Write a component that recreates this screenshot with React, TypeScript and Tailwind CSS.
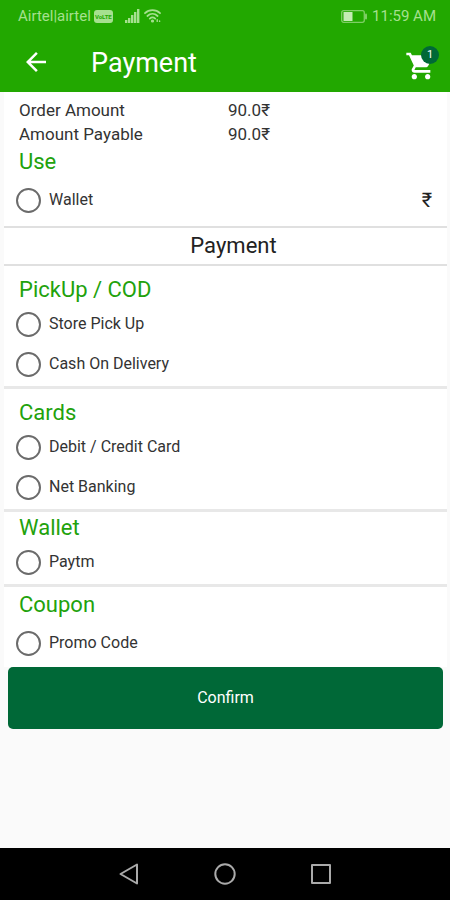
import { useState } from "react";
import { MdArrowBack, MdShoppingCart } from "react-icons/md";

const sections = [
  {
    title: "PickUp / COD",
    className: "pt-2.5",
    options: ["Store Pick Up", "Cash On Delivery"],
  },
  {
    title: "Cards",
    className: "pt-2.5",
    options: ["Debit / Credit Card", "Net Banking"],
  },
  { title: "Wallet", className: "pt-0.5", options: ["Paytm"] },
];

function StatusBar() {
  return (
    <div className="flex h-8 items-center justify-between pl-[18px] pr-[14px] text-[15px] text-[#a6e08f]">
      <div className="flex items-center">
        <span>Airtel|airtel</span>
        <span className="ml-[3px] flex h-[13px] w-[19px] items-center justify-center rounded-[3px] bg-[#a6e08f] text-[6px] font-bold text-[#22a800]">
          VoLTE
        </span>
        {/* Signal strength */}
        <svg className="ml-3 h-[14px] w-[16px]" viewBox="0 0 16 14" fill="currentColor">
          <rect x="0" y="11" width="2.4" height="3" />
          <rect x="3" y="9" width="2.4" height="5" />
          <rect x="6" y="6" width="2.4" height="8" />
          <rect x="9" y="3" width="2.4" height="11" />
          <rect x="12" y="0" width="2.4" height="14" />
        </svg>
        {/* Wifi */}
        <svg
          className="ml-[3px] h-[14px] w-[18px]"
          viewBox="0 0 18 14"
          fill="none"
          stroke="currentColor"
          strokeWidth="1.8"
          strokeLinecap="round"
        >
          <path d="M1 4.2C5 .2 12 .2 16 4.2" />
          <path d="M3.4 7C6.4 4.2 10.6 4.2 13.6 7" />
          <path d="M5.8 9.6c1.6-1.4 3.8-1.4 5.4 0" />
          <circle cx="8.5" cy="12" r="0.7" fill="currentColor" />
          <path d="M13.2 10.8v1.6M15.6 12v.4" strokeWidth="1.4" />
        </svg>
      </div>
      <div className="flex items-center gap-[5px]">
        <svg className="h-[13px] w-[26px]" viewBox="0 0 26 13" fill="none">
          <rect x="0.7" y="0.7" width="22.6" height="11.6" rx="2" stroke="#7fce66" strokeWidth="1.3" />
          <rect x="2.5" y="2" width="9" height="9" fill="#c4ecb4" />
          <rect x="24" y="3.5" width="2" height="6" rx="1" fill="#7fce66" />
        </svg>
        <span>11:59 AM</span>
      </div>
    </div>
  );
}

function SectionTitle({ children }: { children: string }) {
  return <h2 className="pl-[15px] text-[22px] leading-7 text-[#22a20c]">{children}</h2>;
}

function Option({ label, value, selected, onSelect }: any) {
  return (
    <label className="flex h-10 items-center gap-2 pl-3 text-[16px] text-[#333]">
      <input
        type="radio"
        name="payment"
        value={value}
        checked={selected === value}
        onChange={() => onSelect(value)}
        className="size-[25px] appearance-none rounded-full border-2 border-[#6b6b6b] checked:border-[#22a800] checked:bg-[#22a800] checked:bg-clip-content checked:p-1"
      />
      {label}
    </label>
  );
}

export default function App() {
  const [selected, setSelected] = useState("");

  return (
    <div className="flex min-h-screen flex-col bg-[#fafafa] font-[Roboto,sans-serif]">
      <header className="bg-[#22a800]">
        <StatusBar />
        <div className="flex h-[60px] items-center pl-[21px] pr-[13px] text-white">
          <button aria-label="Back">
            <MdArrowBack size={30} />
          </button>
          <h1 className="ml-10 flex-1 pt-0.5 text-[27px]">Payment</h1>
          <button aria-label="Cart" className="relative pt-2">
            <MdShoppingCart size={32} />
            <span className="absolute -right-0.5 top-1 flex size-[18px] items-center justify-center rounded-full bg-[#006837] text-[11px]">
              1
            </span>
          </button>
        </div>
      </header>

      <main className="ml-1 mr-[3px] flex flex-col">
        {/* Amounts and wallet balance */}
        <section className="border-b-2 border-[#e0e0e0] bg-white pb-1.5 pt-1.5">
          <dl className="grid grid-cols-[209px_1fr] pl-[15px] text-[17px] leading-6 text-[#333]">
            <dt>Order Amount</dt>
            <dd>90.0₹</dd>
            <dt>Amount Payable</dt>
            <dd>90.0₹</dd>
          </dl>
          <div className="pt-0.5">
            <SectionTitle>Use</SectionTitle>
          </div>
          <div className="mt-1 flex items-center justify-between pr-[15px]">
            <Option label="Wallet" value="balance" selected={selected} onSelect={setSelected} />
            <span className="text-[20px] text-[#222]">₹</span>
          </div>
        </section>

        <h2 className="border-b-2 border-[#e0e0e0] bg-white pl-4 text-center text-[22px] leading-9 text-[#222]">
          Payment
        </h2>

        {sections.map((section) => (
          <section
            key={section.title}
            className={`border-b-3 border-[#e8e8e8] bg-white pb-0.5 ${section.className}`}
          >
            <SectionTitle>{section.title}</SectionTitle>
            {section.options.map((option) => (
              <Option
                key={option}
                label={option}
                value={option}
                selected={selected}
                onSelect={setSelected}
              />
            ))}
          </section>
        ))}

        <section className="bg-white pb-1 pt-1">
          <SectionTitle>Coupon</SectionTitle>
          <div className="mt-1">
            <Option label="Promo Code" value="promo" selected={selected} onSelect={setSelected} />
          </div>
        </section>

        <button className="mx-1 h-[62px] rounded-[5px] bg-[#006837] text-[16px] text-white">
          Confirm
        </button>
      </main>

      {/* System navigation */}
      <nav className="mt-auto flex h-[52px] items-center justify-center gap-[72px] bg-black text-[#aaa]">
        <button aria-label="Back">
          <svg className="size-6" viewBox="0 0 24 24" fill="none" stroke="currentColor" strokeWidth="2" strokeLinejoin="round">
            <path d="M20 2.5v19L3.5 12z" />
          </svg>
        </button>
        <button aria-label="Home">
          <svg className="size-6" viewBox="0 0 24 24" fill="none" stroke="currentColor" strokeWidth="2">
            <circle cx="12" cy="12" r="9.7" />
          </svg>
        </button>
        <button aria-label="Recents">
          <svg className="size-6" viewBox="0 0 24 24" fill="none" stroke="currentColor" strokeWidth="2" strokeLinejoin="round">
            <rect x="3" y="3" width="18" height="18" />
          </svg>
        </button>
      </nav>
    </div>
  );
}
